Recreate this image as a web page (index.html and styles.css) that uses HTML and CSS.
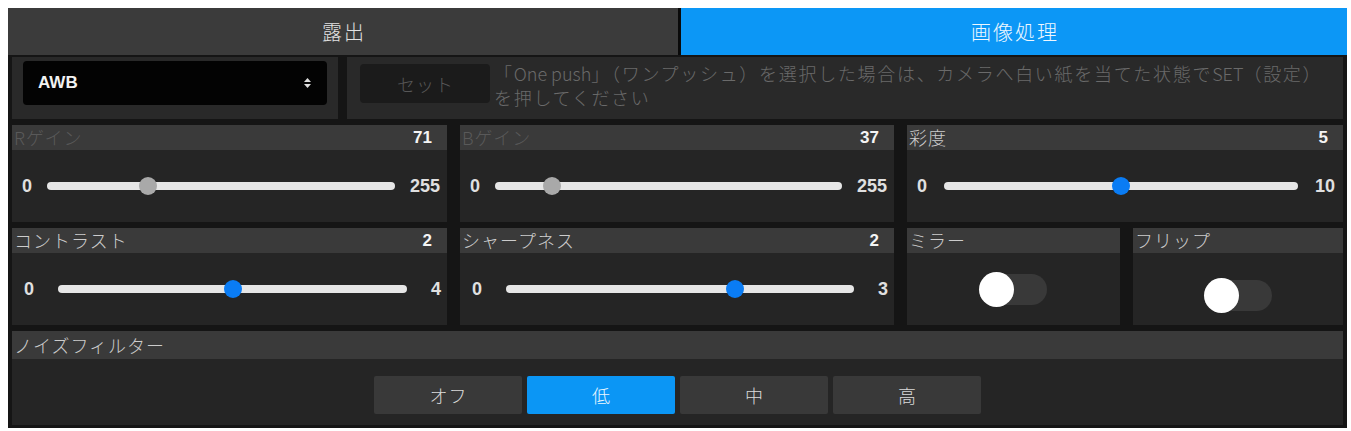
FILE: index.html
```html
<!DOCTYPE html>
<html lang="ja">
<head>
<meta charset="utf-8">
<title>画像処理</title>
<link rel="stylesheet" href="styles.css">
</head>
<body>
<div class="panel">
  <div class="tabs">
    <div class="tab">露出</div>
    <div class="tab active">画像処理</div>
  </div>
  <div class="content">
    <div class="row-wb">
      <div class="cell wb-mode">
        <div class="select">
          <span>AWB</span>
          <svg class="select-arrows" width="7" height="12" viewBox="0 0 7 12"><polygon points="0,5 3.5,1 7,5"/><polygon points="0,7 3.5,11 7,7"/></svg>
        </div>
      </div>
      <div class="cell wb-set">
        <button class="btn-set" type="button">セット</button>
        <p class="hint">「<span class="lat">One push</span>」（ワンプッシュ）を選択した場合は、カメラへ白い紙を当てた状態で<span class="lat">SET</span>（設定）<br>を押してください</p>
      </div>
    </div>

    <div class="grid3">
      <div class="card">
        <div class="card-head"><span class="label disabled">Rゲイン</span><span class="value">71</span></div>
        <div class="card-body range-row">
          <span class="bound">0</span><input class="range off" type="range" min="0" max="255" value="71"><span class="bound">255</span>
        </div>
      </div>
      <div class="card">
        <div class="card-head"><span class="label disabled">Bゲイン</span><span class="value">37</span></div>
        <div class="card-body range-row">
          <span class="bound">0</span><input class="range off" type="range" min="0" max="255" value="37"><span class="bound">255</span>
        </div>
      </div>
      <div class="card">
        <div class="card-head"><span class="label">彩度</span><span class="value">5</span></div>
        <div class="card-body range-row sat">
          <span class="bound">0</span><input class="range" type="range" min="0" max="10" value="5"><span class="bound">10</span>
        </div>
      </div>
    </div>

    <div class="grid3">
      <div class="card">
        <div class="card-head"><span class="label">コントラスト</span><span class="value">2</span></div>
        <div class="card-body range-row loose">
          <span class="bound">0</span><input class="range" type="range" min="0" max="4" value="2"><span class="bound">4</span>
        </div>
      </div>
      <div class="card">
        <div class="card-head"><span class="label">シャープネス</span><span class="value">2</span></div>
        <div class="card-body range-row loose">
          <span class="bound">0</span><input class="range" type="range" min="0" max="3" value="2"><span class="bound">3</span>
        </div>
      </div>
      <div class="pair">
        <div class="card">
          <div class="card-head"><span class="label">ミラー</span></div>
          <div class="card-body switch-body">
            <div class="switch"><span class="knob"></span></div>
          </div>
        </div>
        <div class="card">
          <div class="card-head"><span class="label">フリップ</span></div>
          <div class="card-body switch-body">
            <div class="switch low"><span class="knob"></span></div>
          </div>
        </div>
      </div>
    </div>

    <div class="card noise">
      <div class="card-head tall"><span class="label">ノイズフィルター</span></div>
      <div class="card-body seg-wrap">
        <div class="seg">
          <button type="button">オフ</button>
          <button type="button" class="on">低</button>
          <button type="button">中</button>
          <button type="button">高</button>
        </div>
      </div>
    </div>
  </div>
</div>
</body>
</html>
```

FILE: styles.css
```css
* { box-sizing: border-box; }
html, body { background: #ffffff; }
body {
  margin: 8px 4px 3px 8px;
  font-family: "Liberation Sans", "Noto Sans CJK JP", sans-serif;
}
.panel {
  background: #151515;
  height: 420px;
  display: flex;
  flex-direction: column;
}
.tabs {
  display: grid;
  grid-template-columns: 670px 1fr;
  column-gap: 3px;
  height: 47px;
  background: #0a0a0a;
  flex: none;
}
.tab {
  background: #3b3b3b;
  color: #e2e2e2;
  font-family: "Noto Sans CJK JP", sans-serif;
  font-weight: 300;
  font-size: 20px;
  letter-spacing: 2px;
  padding-left: 2px;
  display: flex;
  align-items: center;
  justify-content: center;
}
.tab.active { background: #0c97f6; color: #eef7ff; }

.content {
  padding: 2px 4px 3px;
  display: flex;
  flex-direction: column;
  gap: 6px;
}

/* white balance row */
.row-wb {
  display: grid;
  grid-template-columns: 326px 1fr;
  column-gap: 9px;
  height: 62px;
}
.cell { background: #292929; }
.wb-mode { padding: 4px 11px 0; }
.select {
  height: 44px;
  background: #030303;
  border-radius: 4px;
  display: flex;
  align-items: center;
  justify-content: space-between;
  padding: 0 16px 0 15px;
  color: #f2f2f2;
  font-weight: bold;
  font-size: 17px;
}
.select-arrows { fill: #dddddd; }
.wb-set {
  display: flex;
  align-items: flex-start;
  gap: 4px;
  padding: 4px 0 0 13px;
}
.btn-set {
  flex: none;
  width: 130px;
  height: 39px;
  margin-top: 3px;
  background: #1b1b1b;
  border: 0;
  border-radius: 4px;
  color: #575757;
  font-family: "Noto Sans CJK JP", sans-serif;
  font-weight: 300;
  font-size: 18px;
  letter-spacing: 1px;
  padding: 0 0 0 1px;
}
.hint {
  margin: 0;
  font-family: "Noto Sans CJK JP", sans-serif;
  font-weight: 300;
  font-size: 18px;
  line-height: 24px;
  letter-spacing: 1.7px;
  color: #6a6a6a;
  white-space: nowrap;
}
.hint .lat { letter-spacing: 0; }

/* cards */
.grid3 {
  display: grid;
  grid-template-columns: 435px 434px 1fr;
  column-gap: 13px;
  height: 97px;
}
.pair {
  display: grid;
  grid-template-columns: 213px 1fr;
  column-gap: 13px;
}
.card {
  display: flex;
  flex-direction: column;
  background: #252525;
}
.card-head {
  flex: none;
  height: 25px;
  background: #3a3a3a;
  display: flex;
  align-items: center;
  justify-content: space-between;
  padding: 0 15px 0 2px;
}
.card-head.tall { height: 28px; }
.label {
  font-family: "Noto Sans CJK JP", sans-serif;
  font-weight: 300;
  font-size: 18px;
  line-height: 25px;
  letter-spacing: 1px;
  color: #cccccc;
}
.label.disabled { color: #595959; }
.value {
  font-size: 17px;
  font-weight: bold;
  color: #f4f4f4;
}
.card-body {
  flex: 1;
  display: flex;
  align-items: center;
}

/* sliders */
.range-row { padding: 0 7px 0 10px; gap: 15px; }
.range-row.sat { padding: 0 8px 0 10px; gap: 17px; }
.range-row.loose { padding: 0 6px 0 12px; gap: 24px; }
.bound {
  font-size: 18px;
  font-weight: bold;
  color: #e0e0e0;
}
.range {
  -webkit-appearance: none;
  appearance: none;
  flex: 1;
  min-width: 0;
  height: 20px;
  margin: 0;
  background: transparent;
}
.range::-webkit-slider-runnable-track {
  height: 8px;
  border-radius: 4px;
  background: #e6e6e6;
}
.range::-webkit-slider-thumb {
  -webkit-appearance: none;
  appearance: none;
  width: 18px;
  height: 18px;
  margin-top: -5px;
  border: 0;
  border-radius: 50%;
  background: #0a7cf4;
}
.range.off::-webkit-slider-thumb { background: #a9a9a9; }

/* switches */
.switch-body { justify-content: center; }
.switch {
  width: 67px;
  height: 31px;
  border-radius: 16px;
  background: #393939;
  display: flex;
  align-items: center;
}
.switch.low { margin-top: 12px; }
.knob {
  flex: none;
  width: 35px;
  height: 35px;
  margin-left: -1px;
  border-radius: 50%;
  background: #ffffff;
}

/* noise filter */
.noise { height: 94px; flex: none; }
.seg-wrap {
  justify-content: center;
  align-items: flex-start;
  padding-top: 17px;
}
.seg { display: flex; gap: 5px; }
.seg button {
  width: 148px;
  height: 38px;
  background: #393939;
  border: 0;
  border-radius: 2px;
  color: #dadada;
  font-family: "Noto Sans CJK JP", sans-serif;
  font-weight: 300;
  font-size: 18px;
  letter-spacing: 1px;
  padding: 0 0 0 1px;
}
.seg button.on { background: #0b96f5; color: #eaf6ff; }
```
